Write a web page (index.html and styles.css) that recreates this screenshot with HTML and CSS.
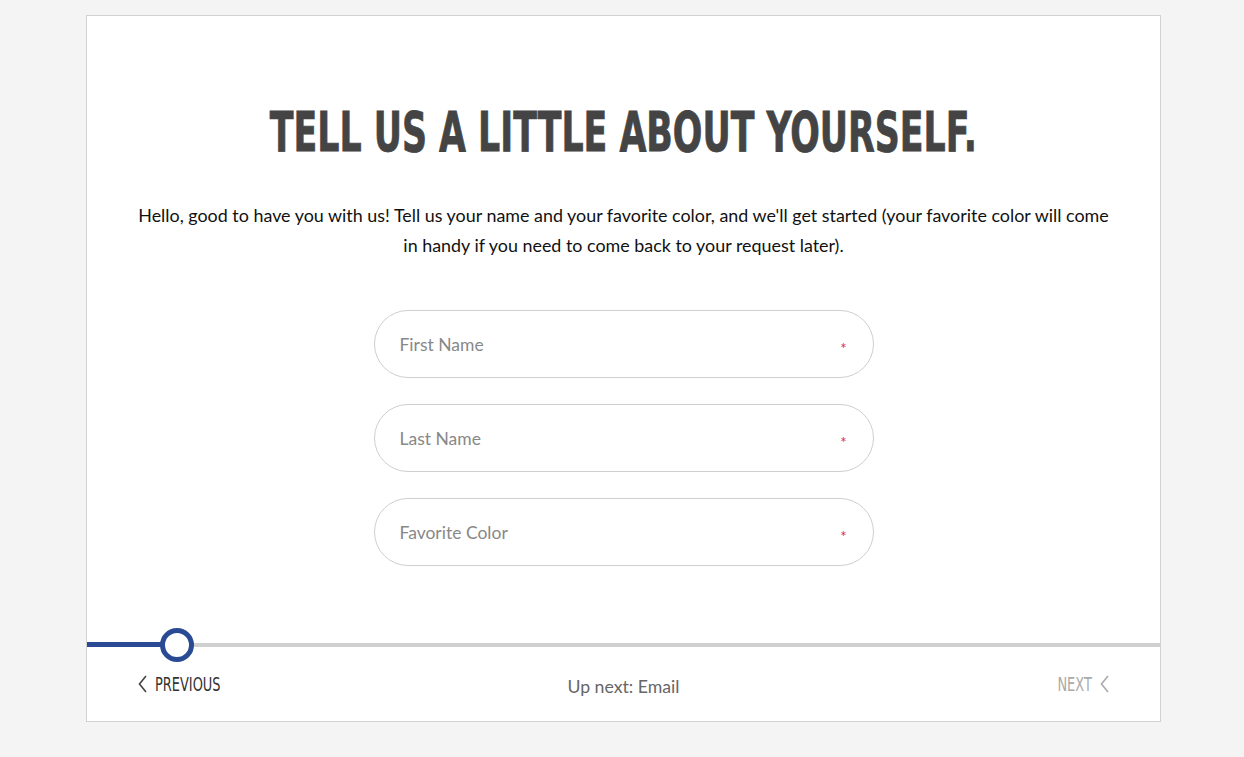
FILE: index.html
```
<!DOCTYPE html>
<html>
<head>
<meta charset="utf-8">
<link rel="stylesheet" href="styles.css">
</head>
<body>
<div class="card">
  <div class="content">
    <h1 class="title"><span class="squeeze">TELL US A LITTLE ABOUT YOURSELF.</span></h1>
    <p class="intro">Hello, good to have you with us! Tell us your name and your favorite color, and we'll get started (your favorite color will come in handy if you need to come back to your request later).</p>
    <form class="fields">
      <div class="field"><span class="ph">First Name</span><span class="req">*</span></div>
      <div class="field"><span class="ph">Last Name</span><span class="req">*</span></div>
      <div class="field"><span class="ph">Favorite Color</span><span class="req">*</span></div>
    </form>
  </div>
  <div class="progress">
    <div class="fill"></div>
    <div class="knob"></div>
  </div>
  <div class="footer">
    <div class="nav prev"><svg class="chev" width="9" height="18" viewBox="0 0 9 18"><path d="M8 1 L1.5 9 L8 17" fill="none" stroke="#444" stroke-width="1.6"/></svg><span class="navtext">PREVIOUS</span></div>
    <div class="upnext">Up next: Email</div>
    <div class="nav next"><span class="navtext">NEXT</span><svg class="chev" width="9" height="18" viewBox="0 0 9 18"><path d="M8 1 L1.5 9 L8 17" fill="none" stroke="#aaa" stroke-width="1.6"/></svg></div>
  </div>
</div>
</body>
</html>
```
FILE: styles.css
```
html, body { margin: 0; padding: 0; }
body {
  background: #f4f4f4;
  font-family: "Lato", "Open Sans", sans-serif;
  padding-top: 15px;
}
.card {
  width: 1073px;
  height: 705px;
  margin-left: 86px;
  background: #fff;
  border: 1px solid #d2d2d2;
  display: flex;
  flex-direction: column;
}
.content {
  padding: 0 51px;
  height: 626px;
  display: flex;
  flex-direction: column;
  align-items: center;
}
.title {
  margin: 86px 0 0;
  font-family: "DejaVu Sans Condensed", "DejaVu Sans", sans-serif;
  font-weight: 700;
  font-size: 56px;
  line-height: 60px;
  color: #444;
  white-space: nowrap;
  width: 100%;
  display: flex;
  justify-content: center;
  -webkit-text-stroke: 0.8px #444;
}
.squeeze {
  display: inline-block;
  transform: scaleX(0.69);
  transform-origin: center;
}
.intro {
  margin: 38px 0 0;
  font-size: 17.9px;
  line-height: 30px;
  color: #111;
  text-align: center;
}
.fields {
  margin-top: 50px;
  display: flex;
  flex-direction: column;
  gap: 26px;
}
.field {
  height: 66px;
  border: 1px solid #cfcfcf;
  border-radius: 34px;
  display: flex;
  align-items: center;
  justify-content: space-between;
  padding: 0 26px 0 25px;
  box-sizing: content-box;
  width: 447px;
}
.ph { font-size: 17.5px; color: #888; }
.req { color: #e0245e; font-size: 15px; margin-top: 7px; }
.progress {
  position: relative;
  height: 4px;
  background: #d0d0d0;
  margin-top: 1px;
}
.fill {
  position: absolute;
  left: 0; top: -1px;
  width: 90px; height: 5px;
  background: #2a4a94;
}
.knob {
  position: absolute;
  left: 73px; top: -15px;
  width: 24px; height: 24px;
  border: 5px solid #2a4a94;
  border-radius: 50%;
  background: #fff;
}
.footer {
  flex: 1;
  display: grid;
  grid-template-columns: 1fr auto 1fr;
  align-items: center;
  padding: 0 51px;
}
.nav {
  display: flex;
  align-items: center;
  gap: 8px;
  font-family: "DejaVu Sans Condensed", "DejaVu Sans", sans-serif;
  font-size: 20px;
  margin-top: 0;
}
.navtext {
  display: inline-block;
  transform: scaleX(0.72);
}
.prev { color: #333; justify-self: start; }
.prev .navtext { transform-origin: left center; margin-right: -25px; }
.next { color: #aaa; justify-self: end; }
.next .navtext { transform-origin: right center; margin-left: -13px; }
.upnext { font-size: 17.7px; color: #666; margin-top: 5px; }
```
